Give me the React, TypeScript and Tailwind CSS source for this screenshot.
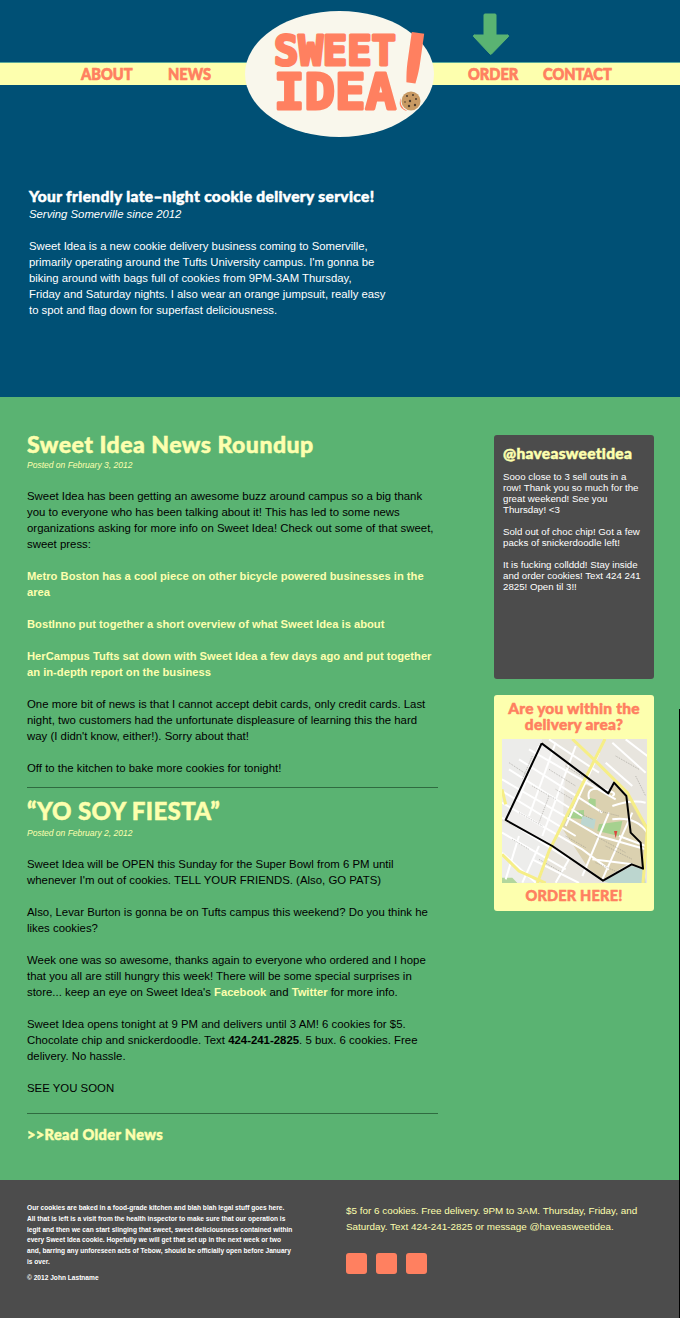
const body = "font-['Liberation_Sans',Arial,sans-serif]";
const head = "font-['Lato',sans-serif] font-black [-webkit-text-stroke:0.5px]";
const nav = "font-['Lato',sans-serif] font-black [-webkit-text-stroke:0.7px]";

function Logo() {
  return (
    <svg width="200" height="135" viewBox="240 5 200 135" className="absolute left-[240px] top-[5px]">
      <ellipse cx="339.5" cy="74" rx="94.5" ry="63" fill="#f9f7ec" />
      <g fill="#ff8060" stroke="#ff8060" strokeWidth="3" strokeLinejoin="round" fontFamily="DejaVu Sans Mono" fontWeight="700">
        <text x="274" y="65" fontSize="41" textLength="122" lengthAdjust="spacingAndGlyphs">SWEET</text>
        <text x="274" y="109" fontSize="49" textLength="122" lengthAdjust="spacingAndGlyphs">IDEA</text>
        <text x="0" y="0" fontSize="108" fontFamily="Lato" strokeWidth="0" transform="translate(392 108) rotate(8)">!</text>
      </g>
      <circle cx="411" cy="101" r="10.500" fill="#f9f7ec" />
      <circle cx="411" cy="101" r="9.500" fill="#c89a63" />
      <g fill="#4a3a2c">
        <circle cx="407" cy="96" r="1" /><circle cx="413" cy="95" r="1" /><circle cx="416" cy="99" r="1" />
        <circle cx="410" cy="101" r="1.200" /><circle cx="405" cy="102" r="0.800" /><circle cx="409" cy="106" r="1.200" /><circle cx="415" cy="105" r="1.200" />
      </g>
    </svg>
  );
}

function Arrow() {
  return (
    <svg width="38" height="46" viewBox="0 0 38 46" className="absolute left-[472px] top-[11px]">
      <path d="M13 3 h10 a1 1 0 0 1 1 1 V24 H35 a1 1 0 0 1 1 2 L19.500 43 a1 1 0 0 1 -1.500 0 L2 26 a1 1 0 0 1 1 -2 H12 V4 a1 1 0 0 1 1 -1z" fill="#5ab372" stroke="#5ab372" strokeWidth="1" strokeLinejoin="round" />
    </svg>
  );
}

function MapArt() {
  const whites = [
    "M9 130 L300 300 L440 340", "M9 200 L250 340 L330 400", "M60 70 L310 230", "M90 40 L350 190", "M9 290 L200 400", "M9 350 L110 440",
    "M30 100 L250 240", "M9 165 L230 300", "M150 10 L300 110", "M9 245 L210 370", "M100 370 L240 441",
    "M170 20 L90 240", "M230 30 L130 300", "M300 50 L200 270", "M60 300 L20 430", "M120 330 L70 440", "M210 370 L170 440", "M120 30 L60 190",
    "M330 230 L250 420", "M400 230 L310 430", "M340 20 L440 110", "M380 10 L445 60", "M320 80 L400 150", "M270 190 Q260 150 310 160 T340 180",
    "M340 210 Q400 190 440 200", "M340 250 Q420 240 450 300", "M360 300 L440 330", "M280 370 L400 385",
  ];
  const greys = [
    "M30 80 L90 120", "M100 150 L170 190", "M150 100 L230 150", "M60 230 L130 270", "M200 90 L280 140", "M170 160 L220 190", "M200 300 L260 335",
    "M40 310 L90 340", "M120 370 L190 410", "M290 300 L380 350", "M290 380 L360 410", "M350 60 L420 100", "M410 120 L440 180", "M100 60 L70 130", "M150 180 L120 260",
    "M300 225 L360 240", "M320 330 L400 370", "M240 230 L280 250",
  ];
  return (
    <svg width="145" height="144" viewBox="9 9 435 432" className="mx-auto block">
      <rect x="9" y="9" width="435" height="432" fill="#e8e5de" />
      <polygon points="9,9 130,9 20,250 9,250" fill="#ececea" />
      <polygon points="9,255 160,330 110,440 9,440" fill="#ededeb" />
      <polygon points="20,250 128,25 200,80 190,280 160,330" fill="#f0efed" />
      <polygon points="255,145 330,170 345,145 385,180 445,270 440,400 385,385 312,432 270,400 185,270" fill="#dbd1b0" />
      <polygon points="215,225 255,222 255,250 205,245" fill="#a6d18f" />
      <polygon points="268,185 290,190 290,215 270,210" fill="#a6d18f" />
      <polygon points="300,265 370,255 360,300 295,285" fill="#a6d18f" />
      <polygon points="250,240 290,250 285,280 245,265" fill="#bcd6d0" />
      <polygon points="312,436 398,390 435,400 440,441 330,441" fill="#bcd6cf" />
      <polygon points="9,425 40,425 55,441 9,441" fill="#b2d69c" />
      <g fill="none" stroke="#fff" strokeWidth="6">{whites.map((d) => <path key={d} d={d} />)}</g>
      <g fill="none" stroke="#8f8d86" strokeWidth="3" strokeDasharray="3 3" opacity="0.55">{greys.map((d) => <path key={d} d={d} />)}</g>
      <g fill="none" stroke="#f6ee86" strokeWidth="9">
        <path d="M220 9 L300 85 L385 170 L445 280" />
        <path d="M318 9 L275 95 L205 235 L150 345 L115 441" />
        <path d="M9 355 L60 405 L115 430 L140 441" />
        <path d="M9 160 L20 205" />
        <path d="M445 280 L432 441" />
      </g>
      <polygon points="345,285 355,285 350,307" fill="#d8483e" />
      <polyline points="128,22 328,172 345,140 382,180 395,290 425,320 432,398 398,385 312,434 160,330 20,252 128,22" fill="none" stroke="#000" strokeWidth="6" strokeLinejoin="round" />
    </svg>
  );
}

const linkP = "text-[11.200px] font-bold text-[#fdffae]";
const navItem = "block origin-left scale-x-[0.86] whitespace-nowrap";

export default function App() {
  return (
    <div className={`${body} relative w-[680px] overflow-hidden text-[11.400px] leading-4 text-black`}>
      <div className="absolute bottom-0 right-0 top-[709px] w-px bg-black" />
      <header className="relative h-[397px] bg-[#005075] pt-[62px]">
        <nav className={`${nav} flex h-[23px] items-center border-t border-[#5aa89a] bg-[#fdffae] text-[17px] text-[#ff8060]`}>
          <a className="ml-[81px] w-[87px]"><span className={navItem}>ABOUT</span></a>
          <a className="w-[60px]"><span className={navItem}>NEWS</span></a>
          <a className="ml-[240px] w-[75px]"><span className={navItem}>ORDER</span></a>
          <a><span className={navItem}>CONTACT</span></a>
        </nav>
        <Logo />
        <Arrow />
        <div className="ml-[29px] mt-[102px] w-[370px] text-white">
          <h2 className={`${head} text-[15.500px] leading-[19px] tracking-[0.35px]`}>Your friendly late–night cookie delivery service!</h2>
          <p className="text-[11.330px] italic leading-[16px]">Serving Somerville since 2012</p>
          <p className="mt-4 text-[11.330px] leading-[16px]">
            Sweet Idea is a new cookie delivery business coming to Somerville,<br />
            primarily operating around the Tufts University campus. I'm gonna be<br />
            biking around with bags full of cookies from 9PM-3AM Thursday,<br />
            Friday and Saturday nights. I also wear an orange jumpsuit, really easy<br />
            to spot and flag down for superfast deliciousness.
          </p>
        </div>
      </header>

      <main className="flex h-[783px] items-start bg-[#5ab372] pl-[27px] pt-[34px]">
        <div className="w-[411px]">
          <h1 className={`${head} text-[23px] leading-[27px] tracking-[0.5px] text-[#fdffae]`}>Sweet Idea News Roundup</h1>
          <p className="text-[8.500px] italic leading-[14px] text-[#fdffae]">Posted on February 3, 2012</p>
          <div className="mt-4 flex w-[411px] flex-col gap-4">
            <p>Sweet Idea has been getting an awesome buzz around campus so a big thank<br />you to everyone who has been talking about it! This has led to some news<br />organizations asking for more info on Sweet Idea! Check out some of that sweet,<br />sweet press:</p>
            <p className={linkP}>Metro Boston has a cool piece on other bicycle powered businesses in the<br />area</p>
            <p className={linkP}>BostInno put together a short overview of what Sweet Idea is about</p>
            <p className={linkP}>HerCampus Tufts sat down with Sweet Idea a few days ago and put together<br />an in-depth report on the business</p>
            <p>One more bit of news is that I cannot accept debit cards, only credit cards. Last<br />night, two customers had the unfortunate displeasure of learning this the hard<br />way (I didn't know, either!). Sorry about that!</p>
            <p>Off to the kitchen to bake more cookies for tonight!</p>
          </div>
          <hr className="mt-[11px] border-[#2f6b40]" />
          <h1 className={`${head} mt-[9px] text-[24px] leading-[28px] tracking-[0.4px] text-[#fdffae]`}>“YO SOY FIESTA”</h1>
          <p className="mt-px text-[8.500px] italic leading-[14px] text-[#fdffae]">Posted on February 2, 2012</p>
          <div className="mt-4 flex w-[411px] flex-col gap-4">
            <p>Sweet Idea will be OPEN this Sunday for the Super Bowl from 6 PM until<br />whenever I'm out of cookies. TELL YOUR FRIENDS. (Also, GO PATS)</p>
            <p>Also, Levar Burton is gonna be on Tufts campus this weekend? Do you think he<br />likes cookies?</p>
            <p>Week one was so awesome, thanks again to everyone who ordered and I hope<br />that you all are still hungry this week! There will be some special surprises in<br />store... keep an eye on Sweet Idea's <b className={linkP}>Facebook</b> and <b className={linkP}>Twitter</b> for more info.</p>
            <p>Sweet Idea opens tonight at 9 PM and delivers until 3 AM! 6 cookies for $5.<br />Chocolate chip and snickerdoodle. Text <b>424-241-2825</b>. 5 bux. 6 cookies. Free<br />delivery. No hassle.</p>
            <p>SEE YOU SOON</p>
          </div>
          <hr className="mt-[17px] border-[#2f6b40]" />
          <p className={`${head} mt-[12px] text-[14.500px] leading-[18px] tracking-[0.4px] text-[#fdffae]`}>&gt;&gt;Read Older News</p>
        </div>

        <aside className="ml-[56px] mt-1 flex w-[160px] flex-col gap-4">
          <div className="h-[244px] rounded-[3px] bg-[#4c4c4c] px-[9px] pt-[8px] text-[9.700px] leading-[11px] text-white">
            <h3 className={`${head} mb-[8px] text-[15.500px] leading-[20px] tracking-[0.3px] text-[#fdffae]`}>@haveasweetidea</h3>
            <p className="mb-[11px]">Sooo close to 3 sell outs in a<br />row! Thank you so much for the<br />great weekend! See you<br />Thursday! &lt;3</p>
            <p className="mb-[11px]">Sold out of choc chip! Got a few<br />packs of snickerdoodle left!</p>
            <p>It is fucking collddd! Stay inside<br />and order cookies! Text 424 241<br />2825! Open til 3!!</p>
          </div>
          <div className="h-[216px] rounded-[3px] bg-[#fdffae] pt-[5px] text-center">
            <p className={`${head} text-[15.500px] leading-[16px] tracking-[0.2px] text-[#ff8060]`}>Are you within the<br />delivery area?</p>
            <div className="mt-[7px]"><MapArt /></div>
            <p className={`${head} mt-[3px] text-[14.500px] leading-[20px] tracking-[0.2px] text-[#ff8060]`}>ORDER HERE!</p>
          </div>
        </aside>
      </main>

      <footer className="flex h-[138px] items-start bg-[#4c4c4c] pl-[27px] pt-[23px]">
        <div className="w-[266px] text-[6.600px] font-bold leading-[10.800px] text-white">
          <p>Our cookies are baked in a food-grade kitchen and blah blah legal stuff goes here. All that is left is a visit from the health inspector to make sure that our operation is legit and then we can start slinging that sweet, sweet deliciousness contained within every Sweet Idea cookie. Hopefully we will get that set up in the next week or two and, barring any unforeseen acts of Tebow, should be officially open before January is over.</p>
          <p className="mt-[5px]">© 2012 John Lastname</p>
        </div>
        <div className="ml-[53px] w-[300px]">
          <p className="text-[9.900px] leading-[16px] text-[#fdffae]">$5 for 6 cookies. Free delivery. 9PM to 3AM. Thursday, Friday, and Saturday. Text 424-241-2825 or message @haveasweetidea.</p>
          <div className="mt-[18px] flex gap-[9px]">
            <span className="h-[21px] w-[21px] rounded-[3px] bg-[#ff8060]" />
            <span className="h-[21px] w-[21px] rounded-[3px] bg-[#ff8060]" />
            <span className="h-[21px] w-[21px] rounded-[3px] bg-[#ff8060]" />
          </div>
        </div>
      </footer>
    </div>
  );
}
